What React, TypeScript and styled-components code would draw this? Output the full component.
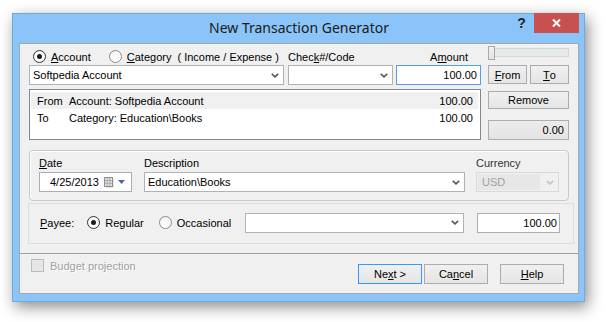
import React from "react";
import styled, { createGlobalStyle } from "styled-components";

const GlobalStyle = createGlobalStyle`
  html, body {
    margin: 0;
    padding: 0;
    background: #ffffff;
  }
  body {
    font-family: "Liberation Sans", Arial, sans-serif;
    font-size: 11px;
    color: #000;
  }
  * {
    box-sizing: border-box;
  }
`;

// page + window frame
const Page = styled.div`
  width: 606px;
  height: 322px;
  padding: 13px 0 0 12px;
  overflow: hidden;
`;

const Window = styled.div`
  width: 573px;
  height: 289px;
  display: flex;
  flex-direction: column;
  background: #8bc4f8;
  border: 1px solid #74a8da;
  padding: 0 5px 7px 6px;
  box-shadow: 3px 5px 14px rgba(0, 0, 0, 0.45);
`;

const TitleBar = styled.div`
  height: 29px;
  display: grid;
  grid-template-columns: 1fr auto 1fr;
`;

const Title = styled.div`
  grid-column: 2;
  font-family: "Noto Sans", "Open Sans", sans-serif;
  font-size: 14px;
  line-height: 28px;
  color: #1a1a1a;
`;

const Controls = styled.div`
  grid-column: 3;
  justify-self: end;
  display: flex;
  margin-top: -1px;
`;

const HelpButton = styled.div`
  width: 25px;
  height: 20px;
  display: flex;
  align-items: center;
  justify-content: center;
  font-family: "Liberation Sans", Arial, sans-serif;
  font-weight: bold;
  font-size: 14px;
  color: #222;
`;

const CloseButton = styled.div`
  width: 45px;
  height: 20px;
  display: flex;
  align-items: center;
  justify-content: center;
  background: #c75050;
`;

const Client = styled.div`
  height: 251px;
  display: flex;
  flex-direction: column;
  background: #f0f0f0;
  border: 1px solid #a7a7a7;
`;

// upper pane
const TopPane = styled.div`
  padding: 2px 9px 9px 9px;
  border-bottom: 1px solid #a0a0a0;
`;

const TopGrid = styled.div`
  display: flex;
  gap: 7px;
  align-items: flex-start;
`;

const LeftCol = styled.div`
  width: 452px;
  display: flex;
  flex-direction: column;
`;

const RightCol = styled.div`
  width: 81px;
  display: flex;
  flex-direction: column;
`;

const LabelRow = styled.div`
  margin-top: 2px;
  height: 17px;
  display: flex;
  align-items: center;
`;

const Cell = styled.div<{ $w: number; $ml?: number; $end?: boolean; $pl?: number; $pr?: number }>`
  width: ${(p) => p.$w}px;
  margin-left: ${(p) => p.$ml ?? 0}px;
  padding-left: ${(p) => p.$pl ?? 0}px;
  padding-right: ${(p) => p.$pr ?? 0}px;
  display: flex;
  align-items: center;
  justify-content: ${(p) => (p.$end ? "flex-end" : "flex-start")};
  white-space: nowrap;
`;

const RadioOption = styled.label<{ $ml?: number }>`
  display: inline-flex;
  align-items: center;
  gap: 5px;
  margin-left: ${(p) => p.$ml ?? 0}px;
  white-space: nowrap;
`;

const Radio = styled.span<{ $checked?: boolean }>`
  width: 13px;
  height: 13px;
  border-radius: 50%;
  border: 1px solid ${(p) => (p.$checked ? "#333" : "#8a8a8a")};
  background: linear-gradient(#f4f4f4, #ffffff);
  display: flex;
  align-items: center;
  justify-content: center;
  flex-shrink: 0;

  &::after {
    content: "";
    width: 5px;
    height: 5px;
    border-radius: 50%;
    background: ${(p) => (p.$checked ? "#1c1c1c" : "transparent")};
  }
`;

const Extra = styled.span`
  margin-left: 6px;
`;

const FieldRow = styled.div`
  height: 20px;
  display: flex;
`;

const Combo = styled.div<{ $w: number; $ml?: number; $disabled?: boolean }>`
  width: ${(p) => p.$w}px;
  height: 20px;
  margin-left: ${(p) => p.$ml ?? 0}px;
  display: flex;
  align-items: center;
  justify-content: space-between;
  padding: 0 4px 0 3px;
  background: ${(p) => (p.$disabled ? "#f0f0f0" : "#fff")};
  border: 1px solid ${(p) => (p.$disabled ? "#d9d9d9" : "#b2b2b2")};
  color: ${(p) => (p.$disabled ? "#a0a0a0" : "#000")};
  white-space: nowrap;
`;

const DisabledValue = styled.div`
  width: 62px;
  height: 16px;
  margin-left: -2px;
  padding-left: 4px;
  display: flex;
  align-items: center;
  background: #e7e7e7;
`;

const TextField = styled.div<{ $w: number; $ml?: number; $focus?: boolean; $pr?: number }>`
  width: ${(p) => p.$w}px;
  height: 20px;
  margin-left: ${(p) => p.$ml ?? 0}px;
  display: flex;
  align-items: center;
  justify-content: flex-end;
  padding-right: ${(p) => p.$pr ?? 3}px;
  background: #fff;
  border: 1px solid ${(p) => (p.$focus ? "#569de5" : "#abadb3")};
`;

const ListBox = styled.div`
  margin-top: 4px;
  height: 51px;
  background: #fff;
  border: 1px solid #828790;
  padding: 2px 2px 0 1px;
`;

const ListRow = styled.div<{ $selected?: boolean }>`
  height: 17px;
  display: flex;
  align-items: center;
  padding: 0 5px 0 6px;
  background: ${(p) => (p.$selected ? "#f0f0f0" : "transparent")};
`;

const RowType = styled.span`
  width: 32px;
`;

const RowDesc = styled.span`
  flex: 1;
`;

const Slider = styled.div`
  height: 13px;
  display: flex;
  align-items: center;
`;

const Track = styled.div`
  flex: 1;
  height: 9px;
  display: flex;
  align-items: center;
  background: #e7eaea;
  border: 1px solid #d6d6d6;
`;

const Thumb = styled.div`
  width: 7px;
  height: 14px;
  margin-left: -1px;
  background: linear-gradient(#f0f0f0, #e2e2e2);
  border: 1px solid #a9a9a9;
  flex-shrink: 0;
`;

const Button = styled.div<{ $w?: number; $h?: number; $mt?: number; $ml?: number; $grow?: boolean; $primary?: boolean }>`
  width: ${(p) => (p.$w ? `${p.$w}px` : "auto")};
  flex: ${(p) => (p.$grow ? "1" : "none")};
  height: ${(p) => p.$h ?? 20}px;
  margin-top: ${(p) => p.$mt ?? 0}px;
  margin-left: ${(p) => p.$ml ?? 0}px;
  display: flex;
  align-items: center;
  justify-content: center;
  background: linear-gradient(#f0f0f0, #e5e5e5);
  border: 1px solid ${(p) => (p.$primary ? "#3399ff" : "#acacac")};
  white-space: nowrap;
`;

const ButtonPair = styled.div`
  margin-top: 6px;
  display: flex;
  gap: 3px;
`;

const TotalBox = styled.div`
  margin-top: 11px;
  height: 20px;
  display: flex;
  align-items: center;
  justify-content: flex-end;
  padding-right: 4px;
  background: linear-gradient(#ececec, #e3e3e3);
  border: 1px solid #adadad;
`;

// date / description / currency group
const DateGroup = styled.div`
  margin-top: 10px;
  height: 51px;
  display: flex;
  padding: 6px 9px 0 9px;
  border: 1px solid #c9c9c9;
  border-radius: 4px;
  box-shadow: inset 1px 1px 0 #fff;
`;

const FieldCol = styled.div<{ $w: number; $ml?: number }>`
  width: ${(p) => p.$w}px;
  margin-left: ${(p) => p.$ml ?? 0}px;
  display: flex;
  flex-direction: column;
`;

const FieldLabel = styled.div<{ $muted?: boolean }>`
  height: 13px;
  line-height: 13px;
  margin-bottom: 2px;
  color: ${(p) => (p.$muted ? "#333" : "#000")};
`;

const DateField = styled.div`
  height: 20px;
  display: flex;
  align-items: center;
  justify-content: space-between;
  padding: 0 6px 0 10px;
  background: #fff;
  border: 1px solid #abadb3;
`;

const PickerIcons = styled.div`
  display: flex;
  align-items: center;
  gap: 4px;
`;

// payee
const PayeeBox = styled.div`
  margin-top: 2px;
  margin-left: -1px;
  width: 546px;
  height: 41px;
  display: flex;
  align-items: center;
  align-self: flex-start;
  padding: 0 13px 2px 11px;
  border: 1px solid #dcdcdc;
`;

const PayeeLabel = styled.span`
  margin-right: 13px;
`;

const PushRight = styled.div`
  margin-left: auto;
  display: flex;
`;

// bottom pane
const BottomPane = styled.div`
  flex: 1;
  display: flex;
  align-items: flex-start;
  padding: 5px 14px 0 11px;
`;

const CheckRow = styled.div`
  display: flex;
  align-items: center;
  gap: 6px;
  height: 13px;
  color: #a0a0a0;
  text-shadow: 1px 1px 0 #ffffff;
`;

const CheckBox = styled.span`
  width: 13px;
  height: 13px;
  background: #e6e6e6;
  border: 1px solid #bcbcbc;
`;

const DialogButtons = styled.div`
  margin-left: auto;
  margin-top: 5px;
  display: flex;
`;

function Chevron({ color = "#5a5a5a" }: { color?: string }) {
  return (
    <svg width="8" height="5" viewBox="0 0 8 5">
      <polyline points="0.8,0.8 4,3.8 7.2,0.8" fill="none" stroke={color} strokeWidth="1.7" />
    </svg>
  );
}

function CalendarIcon() {
  return (
    <svg width="10" height="11" viewBox="0 0 10 11">
      <rect x="1.5" y="1.5" width="8" height="9" fill="#cfcfcf" />
      <rect x="0.5" y="0.5" width="8" height="9" fill="#e4e4e4" stroke="#8e8e8e" />
      <line x1="3.2" y1="1" x2="3.2" y2="9" stroke="#ababab" />
      <line x1="5.8" y1="1" x2="5.8" y2="9" stroke="#ababab" />
      <line x1="1" y1="3.5" x2="8" y2="3.5" stroke="#ababab" />
      <line x1="1" y1="6.3" x2="8" y2="6.3" stroke="#ababab" />
    </svg>
  );
}

function DropTriangle() {
  return (
    <svg width="7" height="4" viewBox="0 0 7 4">
      <polygon points="0,0 7,0 3.5,4" fill="#4c6aa0" />
    </svg>
  );
}

export default function App() {
  return (
    <>
      <GlobalStyle />
      <Page>
        <Window>
          <TitleBar>
            <Title>New Transaction Generator</Title>
            <Controls>
              <HelpButton>?</HelpButton>
              <CloseButton>
                <svg width="9" height="8" viewBox="0 0 9 8">
                  <line x1="1" y1="0.5" x2="8" y2="7.5" stroke="#fff" strokeWidth="2" />
                  <line x1="8" y1="0.5" x2="1" y2="7.5" stroke="#fff" strokeWidth="2" />
                </svg>
              </CloseButton>
            </Controls>
          </TitleBar>

          <Client>
            <TopPane>
              <TopGrid>
                <LeftCol>
                  <LabelRow>
                    <Cell $w={255} $pl={4}>
                      <RadioOption>
                        <Radio $checked />
                        <span>
                          <u>A</u>ccount
                        </span>
                      </RadioOption>
                      <RadioOption $ml={18}>
                        <Radio />
                        <span>
                          <u>C</u>ategory
                        </span>
                      </RadioOption>
                      <Extra>( Income / Expense )</Extra>
                    </Cell>
                    <Cell $w={105} $ml={4}>
                      Chec<u>k</u>#/Code
                    </Cell>
                    <Cell $w={85} $ml={3} $end $pr={13}>
                      A<u>m</u>ount
                    </Cell>
                  </LabelRow>
                  <FieldRow>
                    <Combo $w={255}>
                      <span>Softpedia Account</span>
                      <Chevron />
                    </Combo>
                    <Combo $w={105} $ml={4}>
                      <span />
                      <Chevron />
                    </Combo>
                    <TextField $w={85} $ml={3} $focus>
                      100.00
                    </TextField>
                  </FieldRow>
                  <ListBox>
                    <ListRow $selected>
                      <RowType>From</RowType>
                      <RowDesc>Account: Softpedia Account</RowDesc>
                      <span>100.00</span>
                    </ListRow>
                    <ListRow>
                      <RowType>To</RowType>
                      <RowDesc>Category: Education\Books</RowDesc>
                      <span>100.00</span>
                    </ListRow>
                  </ListBox>
                </LeftCol>

                <RightCol>
                  <Slider>
                    <Track>
                      <Thumb />
                    </Track>
                  </Slider>
                  <ButtonPair>
                    <Button $h={19} $grow>
                      <u>F</u>rom
                    </Button>
                    <Button $h={19} $grow>
                      <u>T</u>o
                    </Button>
                  </ButtonPair>
                  <Button $h={18} $mt={7}>
                    Remove
                  </Button>
                  <TotalBox>0.00</TotalBox>
                </RightCol>
              </TopGrid>

              <DateGroup>
                <FieldCol $w={94}>
                  <FieldLabel>
                    <u>D</u>ate
                  </FieldLabel>
                  <DateField>
                    <span>4/25/2013</span>
                    <PickerIcons>
                      <CalendarIcon />
                      <DropTriangle />
                    </PickerIcons>
                  </DateField>
                </FieldCol>
                <FieldCol $w={321} $ml={12}>
                  <FieldLabel>Description</FieldLabel>
                  <Combo $w={321}>
                    <span>Education\Books</span>
                    <Chevron />
                  </Combo>
                </FieldCol>
                <FieldCol $w={83} $ml={11}>
                  <FieldLabel $muted>Currency</FieldLabel>
                  <Combo $w={83} $disabled>
                    <DisabledValue>USD</DisabledValue>
                    <Chevron color="#c4c4c4" />
                  </Combo>
                </FieldCol>
              </DateGroup>

              <PayeeBox>
                <PayeeLabel>
                  <u>P</u>ayee:
                </PayeeLabel>
                <RadioOption>
                  <Radio $checked />
                  <span>Regular</span>
                </RadioOption>
                <RadioOption $ml={15}>
                  <Radio />
                  <span>Occasional</span>
                </RadioOption>
                <PushRight>
                  <Combo $w={219}>
                    <span />
                    <Chevron />
                  </Combo>
                  <TextField $w={83} $ml={13} $pr={2}>
                    100.00
                  </TextField>
                </PushRight>
              </PayeeBox>
            </TopPane>

            <BottomPane>
              <CheckRow>
                <CheckBox />
                <span>Budget projection</span>
              </CheckRow>
              <DialogButtons>
                <Button $w={64} $primary>
                  Ne<u>x</u>t &gt;
                </Button>
                <Button $w={64} $ml={2}>
                  Ca<u>n</u>cel
                </Button>
                <Button $w={64} $ml={12}>
                  <u>H</u>elp
                </Button>
              </DialogButtons>
            </BottomPane>
          </Client>
        </Window>
      </Page>
    </>
  );
}
